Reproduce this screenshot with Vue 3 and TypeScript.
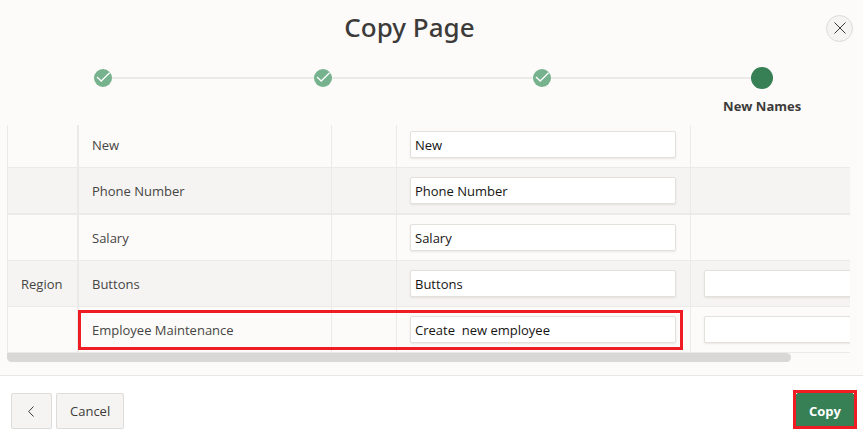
<script setup lang="ts">
import { ref } from 'vue'

interface Step {
  label: string
  done: boolean
}

interface Row {
  id: number
  type: string
  name: string
  newName: string
  hasExtra: boolean
  extra: string
}

const steps: Step[] = [
  { label: '', done: true },
  { label: '', done: true },
  { label: '', done: true },
  { label: 'New Names', done: false },
]

const rows = ref<Row[]>([
  { id: 1, type: '', name: 'New', newName: 'New', hasExtra: false, extra: '' },
  { id: 2, type: '', name: 'Phone Number', newName: 'Phone Number', hasExtra: false, extra: '' },
  { id: 3, type: '', name: 'Salary', newName: 'Salary', hasExtra: false, extra: '' },
  { id: 4, type: 'Region', name: 'Buttons', newName: 'Buttons', hasExtra: true, extra: '' },
  { id: 5, type: '', name: 'Employee Maintenance', newName: 'Create  new employee', hasExtra: true, extra: '' },
])
</script>

<template>
  <div class="dialog">
    <header class="header">
      <h1 class="title">Copy Page</h1>
      <button class="close" type="button" aria-label="Close">
        <svg viewBox="0 0 12 12" width="12" height="12" aria-hidden="true">
          <path d="M0.5 0.5L11.5 11.5M11.5 0.5L0.5 11.5" />
        </svg>
      </button>
    </header>

    <div class="progress">
      <ol class="steps">
        <li v-for="(step, i) in steps" :key="i" class="step">
          <span class="marker-row">
            <span class="marker" :class="{ current: !step.done }">
              <svg v-if="step.done" viewBox="0 0 18 18" width="18" height="18" aria-hidden="true">
                <path d="M3 8L7.2 12L15.6 3.8" />
              </svg>
            </span>
          </span>
          <span v-if="step.label" class="step-label">{{ step.label }}</span>
        </li>
      </ol>
    </div>

    <main class="content">
      <div class="viewport">
        <table class="grid">
          <colgroup>
            <col class="col-type" />
            <col class="col-name" />
            <col class="col-gap" />
            <col class="col-input" />
            <col class="col-input" />
          </colgroup>
          <tbody>
            <tr v-for="row in rows" :key="row.id">
              <td>{{ row.type }}</td>
              <td><label :for="`name-${row.id}`">{{ row.name }}</label></td>
              <td></td>
              <td><input :id="`name-${row.id}`" v-model="row.newName" class="field" type="text" /></td>
              <td>
                <input v-if="row.hasExtra" v-model="row.extra" class="field" type="text" :aria-label="row.name" />
              </td>
            </tr>
          </tbody>
        </table>
        <div class="row-highlight"></div>
      </div>
      <div class="scroll-thumb"></div>
    </main>

    <footer class="footer">
      <button class="btn back" type="button" aria-label="Previous">
        <svg viewBox="0 0 7 11" width="7" height="11" aria-hidden="true">
          <path d="M5.5 0.5L0.7 5.5L5.5 10.5" />
        </svg>
      </button>
      <button class="btn" type="button">Cancel</button>
      <span class="primary-wrap">
        <button class="btn primary" type="button">Copy</button>
      </span>
    </footer>
  </div>
</template>

<style>
body {
  background: #fff;
}
</style>

<style scoped>
.dialog {
  background: #fcfbf9;
  color: #474543;
  font-family: "Open Sans", "Noto Sans", sans-serif;
  font-size: 13px;
  line-height: 18px;
  overflow: hidden;
}

.header {
  display: flex;
  align-items: center;
  gap: 7px;
  height: 56px;
  padding-right: 10px;
}

.title {
  flex: 1;
  margin: 0;
  padding-bottom: 2px;
  color: #3d3b39;
  text-align: center;
  font-family: "Noto Sans", sans-serif;
  font-size: 26px;
  line-height: 36px;
  font-weight: 500;
}

.close {
  display: flex;
  align-items: center;
  justify-content: center;
  width: 27px;
  height: 27px;
  padding: 0;
  border: 1px solid #dddbd9;
  border-radius: 50%;
  background: #f5f4f2;
}

.close svg,
.back svg {
  fill: none;
  stroke: #3d3b39;
  stroke-width: 1;
}

.progress {
  height: 69px;
}

.steps {
  display: grid;
  grid-template-columns: repeat(4, 1fr);
  margin: 0 -9px 0 -7px;
  padding: 11px 0 0;
  list-style: none;
}

.step {
  position: relative;
  display: flex;
  flex-direction: column;
  align-items: center;
  gap: 8px;
}

.step:not(:last-child)::after {
  content: "";
  position: absolute;
  top: 10px;
  left: 50%;
  width: 100%;
  height: 2px;
  background: #ebeae8;
}

.marker-row {
  position: relative;
  z-index: 1;
  display: flex;
  align-items: center;
  height: 22px;
}

.marker {
  width: 18px;
  height: 18px;
  border-radius: 50%;
  background: #75b28d;
}

.marker.current {
  width: 22px;
  height: 22px;
  background: #377f55;
}

.marker svg {
  display: block;
  fill: none;
  stroke: #fff;
  stroke-width: 1.3;
}

.step-label {
  color: #3d3b39;
  font-weight: 700;
}

.content {
  padding: 0 13px 13px 7px;
}

.viewport {
  position: relative;
  overflow: hidden;
}

.grid {
  width: 978px;
  margin-top: -3px;
  table-layout: fixed;
  border-spacing: 0;
}

.col-type {
  width: 72px;
}

.col-name {
  width: 253px;
}

.col-gap {
  width: 65px;
}

.col-input {
  width: 294px;
}

td {
  box-sizing: border-box;
  height: 46px;
  padding: 0 14px 0 13px;
  border-right: 1px solid #ebeae8;
  border-bottom: 1px solid #ebeae8;
}

td:first-child {
  border-left: 1px solid #ebeae8;
  border-right-width: 2px;
}

tr:nth-child(2) td {
  height: 47px;
  border-bottom-width: 2px;
}

tr:nth-child(even) {
  background: #f5f4f3;
}

.field {
  display: block;
  box-sizing: border-box;
  width: 100%;
  height: 27px;
  padding: 0 4px;
  border: 1px solid #e4e1dd;
  border-radius: 2px;
  background: #fff;
  box-shadow: 0 1px 2px rgba(80, 60, 40, 0.1);
  color: #161513;
  font: inherit;
}

.row-highlight {
  position: absolute;
  left: 71px;
  bottom: 3px;
  box-sizing: border-box;
  width: 605px;
  height: 40px;
  border: 3px solid #f01c24;
  pointer-events: none;
}

.scroll-thumb {
  width: 93%;
  height: 9px;
  border-radius: 0 5px 5px 5px;
  background: #d9d8d6;
}

.footer {
  display: flex;
  gap: 4px;
  padding: 17px 9px 8px 11px;
  border-top: 1px solid #e8e7e5;
  background: #fff;
}

.btn {
  height: 36px;
  padding: 0 13px;
  border: 1px solid #dddcda;
  border-radius: 2px;
  background: #f5f4f2;
  color: #3d3b39;
  font: inherit;
}

.back {
  display: flex;
  align-items: center;
  justify-content: center;
  width: 41px;
}

.primary-wrap {
  position: relative;
  margin-left: auto;
}

.primary-wrap::after {
  content: "";
  position: absolute;
  inset: -3px -3px 0;
  border: 3px solid #f01c24;
  pointer-events: none;
}

.primary {
  padding: 0 12px;
  border-color: #377f55;
  background: #377f55;
  color: #fff;
  font-weight: 700;
}
</style>
